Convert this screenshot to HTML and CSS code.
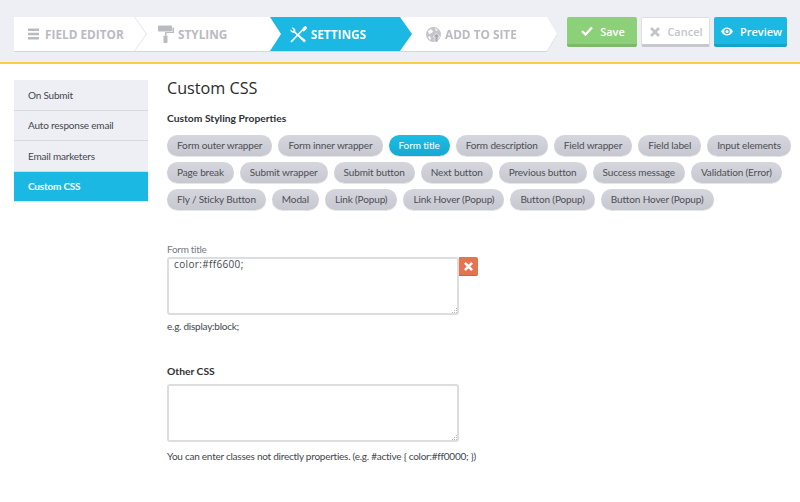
FILE: index.html
```html
<!DOCTYPE html>
<html lang="en">
<head>
<meta charset="utf-8">
<title>Custom CSS</title>
<link rel="stylesheet" href="styles.css">
</head>
<body>
<header class="topbar">
  <nav class="steps">
    <a class="step step-first"><svg class="ico" viewBox="0 0 12 12" width="12" height="12"><path d="M0 0.5h11v2.400H0zM0 4.800h11v2.400H0zM0 9.100h11v2.400H0z" fill="#b9bbc0"/></svg>FIELD EDITOR</a>
    <a class="step step-second"><svg class="ico" viewBox="0 0 18 18" width="18" height="18"><path d="M1 1.500a1 1 0 0 1 1-1h12a1 1 0 0 1 1 1v4a1 1 0 0 1-1 1H2a1 1 0 0 1-1-1z" fill="#b9bbc0"/><path d="M15.500 2.500h1.500v5.500H9.500v2.500h-1.500V7h7.500z" fill="#b9bbc0"/><rect x="6.500" y="10.500" width="4" height="7.500" rx="1" fill="#b9bbc0"/></svg>STYLING</a>
    <a class="step step-active"><svg class="ico" viewBox="0 0 17 17" width="17" height="17"><path d="M1 16L13 3.500M12.500 4l2-2.500 1-.5.5 1-.5 1-2.500 2" stroke="#fff" stroke-width="1.700" fill="none"/><path d="M1.500 1.500a3.300 3.300 0 0 1 3.800 4.200L16 14.500 14.200 16.500 4.300 6.800A3.300 3.300 0 0 1 .3 3.300l2.200 1.900 1.300-1.200z" fill="#fff"/></svg>SETTINGS</a>
    <a class="step step-last"><svg class="ico" viewBox="0 0 17 17" width="17" height="17"><circle cx="8.500" cy="8.500" r="7.500" fill="#c3c5ca"/><path d="M3 5l3-2 2 2-1 2-3 1zM10 2l3 2-2 1zM3 11l2-1 1 3-1 1z" fill="#fff"/><path d="M11.500 7l3.500 4h-2v5h-3v-5h-2z" fill="#a9abb1" stroke="#fff" stroke-width=".6"/></svg>ADD TO SITE</a>
  </nav>
  <div class="actions">
    <button class="btn btn-save"><svg class="ico-btn" viewBox="0 0 12 10" width="12" height="10"><path d="M1 5l3.500 3.500L11 1.500" stroke="#fff" stroke-width="2.400" fill="none"/></svg>Save</button>
    <button class="btn btn-cancel"><svg class="ico-btn" viewBox="0 0 10 10" width="10" height="10"><path d="M1 1l8 8M9 1l-8 8" stroke="#c3c5ca" stroke-width="2.800"/></svg>Cancel</button>
    <button class="btn btn-preview"><svg class="ico-btn" viewBox="0 0 12 9" width="12" height="9"><path d="M0 4.500C2 1.500 4 .5 6 .5s4 1 6 4c-2 3-4 4-6 4s-4-1-6-4z" fill="#fff"/><circle cx="6" cy="4.500" r="2.700" fill="#1ab8e2"/><circle cx="6" cy="4.500" r="1.500" fill="#fff"/></svg>Preview</button>
  </div>
</header>
<div class="page">
  <aside class="side">
    <a class="side-item">On Submit</a>
    <a class="side-item">Auto response email</a>
    <a class="side-item">Email marketers</a>
    <a class="side-item side-active">Custom CSS</a>
  </aside>
  <main class="content">
    <h1 class="title">Custom CSS</h1>
    <h2 class="subtitle">Custom Styling Properties</h2>
    <div class="pills">
      <span class="pill">Form outer wrapper</span>
      <span class="pill">Form inner wrapper</span>
      <span class="pill pill-on">Form title</span>
      <span class="pill">Form description</span>
      <span class="pill">Field wrapper</span>
      <span class="pill">Field label</span>
      <span class="pill">Input elements</span>
      <span class="pill">Page break</span>
      <span class="pill">Submit wrapper</span>
      <span class="pill">Submit button</span>
      <span class="pill">Next button</span>
      <span class="pill">Previous button</span>
      <span class="pill">Success message</span>
      <span class="pill">Validation (Error)</span>
      <span class="pill">Fly / Sticky Button</span>
      <span class="pill">Modal</span>
      <span class="pill">Link (Popup)</span>
      <span class="pill">Link Hover (Popup)</span>
      <span class="pill">Button (Popup)</span>
      <span class="pill">Button Hover (Popup)</span>
    </div>
    <section class="field field-title">
      <label class="field-label">Form title</label>
      <div class="area-row">
        <textarea class="area">color:#ff6600;</textarea>
        <button class="del"><svg viewBox="0 0 10 10" width="9" height="9"><path d="M1 1l8 8M9 1l-8 8" stroke="#fff" stroke-width="2.800"/></svg></button>
      </div>
      <p class="hint">e.g. display:block;</p>
    </section>
    <section class="field field-other">
      <label class="other-label">Other CSS</label>
      <textarea class="area"></textarea>
      <p class="hint hint-far">You can enter classes not directly properties. (e.g. #active { color:#ff0000; })</p>
    </section>
  </main>
</div>
</body>
</html>
```
FILE: styles.css
```css
* { box-sizing: border-box; }
html, body { margin: 0; height: 502px; overflow: hidden; }
body { background: #fff; font-family: "Lato", "Liberation Sans", sans-serif; font-size: 10px; letter-spacing: -.2px; color: #444; }
.topbar { height: 64px; background: #eeeff4; border-bottom: 2px solid #f8cf3f; padding: 17px 13px 0 14px; display: flex; justify-content: space-between; align-items: flex-start; }
.steps { display: flex; width: 543px; height: 35px; filter: drop-shadow(0 1px 0 #d6d7dc); font-family: "Open Sans", sans-serif; font-weight: 700; font-size: 11.8px; letter-spacing: 0; color: #b9bbc0; }
.step { height: 34px; display: flex; align-items: center; position: relative; background: #fff; }
.ico { margin-right: 3px; flex: none; }
.step-first { width: 121px; padding-left: 14px; }
.step-first .ico { margin-right: 5px; }
.step-first::after { content: ""; position: absolute; left: 0; right: -12px; top: 0; bottom: 0; background: #e4e5e9; clip-path: polygon(calc(100% - 12px) 0, 100% 50%, calc(100% - 12px) 100%, calc(100% - 13px) 100%, calc(100% - 1px) 50%, calc(100% - 13px) 0); z-index: 1; }
.step-second { width: 146px; margin-right: -11px; padding-left: 22px; }
.step-active { width: 142px; background: #1ab8e2; color: #fff; padding-left: 20px; z-index: 2; clip-path: polygon(0 0, calc(100% - 12px) 0, 100% 50%, calc(100% - 12px) 100%, 0 100%, 11px 50%); }
.step-active .ico { margin-right: 4px; }
.step-last { width: 157px; margin-left: -12px; padding-left: 25px; clip-path: polygon(0 0, calc(100% - 10px) 0, 100% 50%, calc(100% - 10px) 100%, 0 100%); }
.actions { display: flex; gap: 4px; }
.btn { height: 30px; border: 0; border-radius: 2px; font-family: "Open Sans", sans-serif; font-weight: 600; font-size: 11px; display: flex; align-items: center; justify-content: center; gap: 7px; padding: 1px 0 0 2px; }
.btn-save { width: 70px; background: #8dd07a; color: #fff; border-bottom: 3px solid #7db96b; }
.btn-cancel { width: 69px; background: #fff; color: #c3c5ca; border: 1px solid #dedfe3; border-bottom: 3px solid #c7c8cd; }
.btn-preview { width: 73px; background: #1ab8e2; color: #fff; border-bottom: 3px solid #14a3c9; }
.page { display: flex; padding: 16px 0 0 14px; }
.side { width: 134px; flex: none; display: flex; flex-direction: column; margin-right: 19px; }
.side-item { height: 30.500px; display: flex; align-items: center; padding-left: 14px; background: #eeeff4; border-bottom: 1px solid #d8d9df; color: #44464d; }
.side-active { background: #1ab8e2; color: #fff; font-weight: 700; border-bottom-color: #dfe8ee; }
.content { flex: 1; min-width: 0; }
.title { margin: 0; font-family: "Open Sans", sans-serif; font-weight: 500; font-size: 16.200px; letter-spacing: 0; line-height: 16px; color: #2a2a2d; }
.subtitle { margin: 16px 0 0; font-size: 10.300px; letter-spacing: 0; line-height: 13px; font-weight: 700; color: #2f3034; }
.pills { display: flex; flex-wrap: wrap; gap: 6px; margin-top: 10px; }
.pill { height: 21px; line-height: 20px; padding: 0 10px; border-radius: 11px; background: linear-gradient(#d6d7de, #c6c7cf); box-shadow: 0 1px 0 #e4e5e8; color: #4c4d55; letter-spacing: -.13px; white-space: nowrap; }
.pill-on { background: linear-gradient(#1dbde6, #15a8d2); color: #fff; }
.field-title { margin-top: 33px; }
.field-label { display: block; line-height: 13px; letter-spacing: -.3px; color: #77797f; }
.area-row { display: flex; align-items: flex-start; margin-top: 1px; }
.area { display: block; width: 292px; height: 58px; border: 2px solid #dcdde1; border-radius: 3px; padding: 0 5px; font-family: "Open Sans", sans-serif; font-size: 10px; line-height: 10px; letter-spacing: .35px; color: #44464d; outline: 0; margin: 0; resize: none; background-color: #fff; background-repeat: no-repeat; background-size: 1px 1px; background-image: linear-gradient(#b5b6ba, #b5b6ba), linear-gradient(#b5b6ba, #b5b6ba), linear-gradient(#b5b6ba, #b5b6ba), linear-gradient(#b5b6ba, #b5b6ba), linear-gradient(#b5b6ba, #b5b6ba), linear-gradient(#b5b6ba, #b5b6ba); background-position: right 0 bottom 0, right 2px bottom 0, right 4px bottom 0, right 0 bottom 2px, right 2px bottom 2px, right 0 bottom 4px; }
.del { width: 19px; height: 19px; border: 0; border-bottom: 1px solid #d2603c; background: #e57550; border-radius: 0 2px 2px 0; padding: 0; display: flex; align-items: center; justify-content: center; }
.hint { margin: 5px 0 0; line-height: 13px; letter-spacing: -.25px; color: #44464d; }
.hint-far { margin-top: 8px; }
.field-other { margin-top: 32px; }
.other-label { display: block; font-size: 10.300px; letter-spacing: 0; font-weight: 700; line-height: 13px; color: #2f3034; margin-bottom: 6px; }
```
